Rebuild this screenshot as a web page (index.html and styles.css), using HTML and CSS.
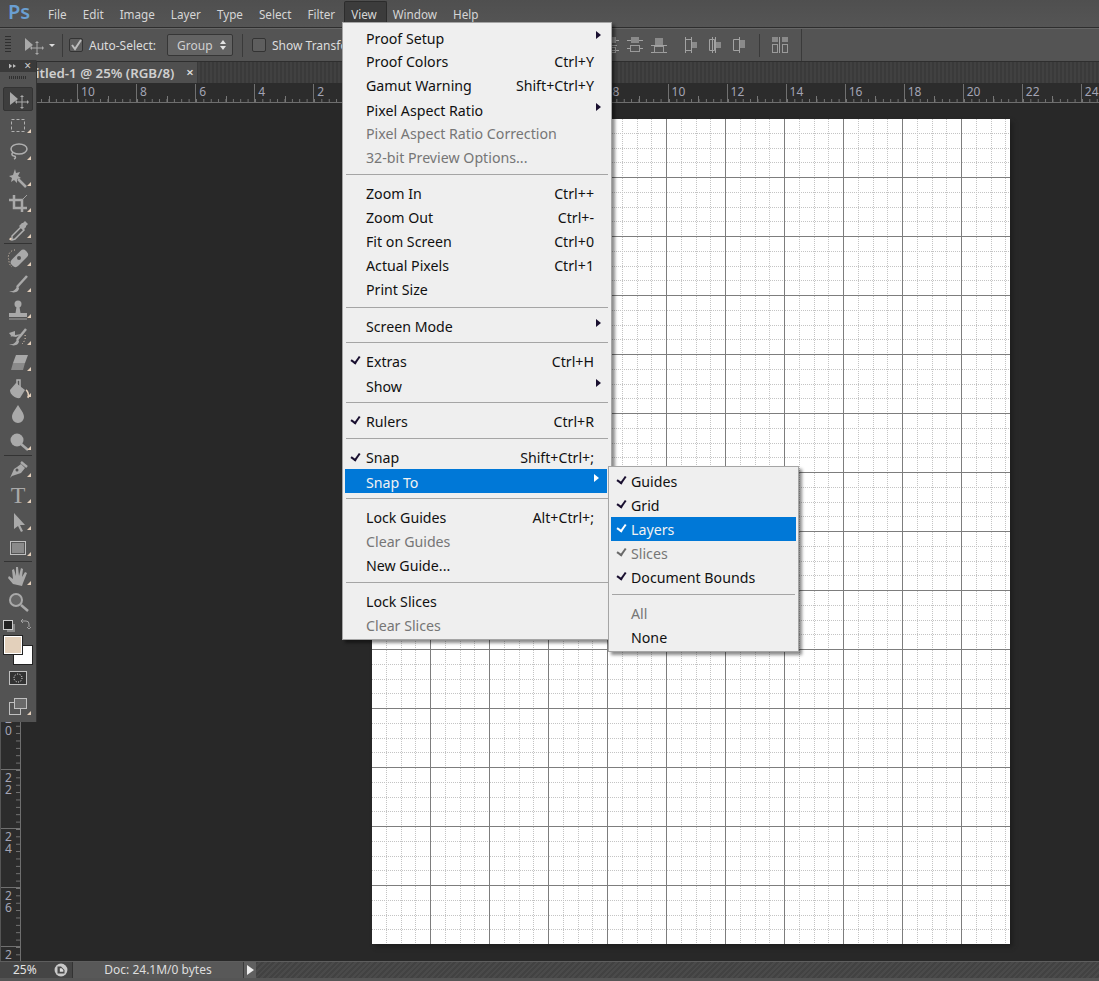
FILE: index.html
```html
<!DOCTYPE html>
<html lang="en">
<head>
<meta charset="utf-8">
<title>Photoshop</title>
<link rel="stylesheet" href="styles.css">
</head>
<body>
<div class="app">
  <header class="menubar">
    <span class="logo">Ps</span>
    <nav class="menus">
      <span>File</span><span>Edit</span><span>Image</span><span>Layer</span><span>Type</span><span>Select</span><span>Filter</span><span class="menu-open">View</span><span>Window</span><span>Help</span>
    </nav>
  </header>

  <section class="options">
    <span class="grip"></span>
    <svg class="opt-move" width="20" height="24" viewBox="0 0 20 24"><path class="f1" d="M1 5 9 12 1 18Z"/><path class="s2" d="M13 10v10M8 15h10"/><path class="f2" d="M13 8l2 2h-4zM13 22l2-2h-4zM6 15l2 2v-4zM20 15l-2 2v-4z"/></svg>
    <span class="caret"></span>
    <span class="vsep vsep-a"></span>
    <span class="check on"><svg width="14" height="14" viewBox="0 0 14 14"><path class="chk" d="M3 7l3 4 6-9"/></svg></span>
    <span class="opt-label">Auto-Select:</span>
    <span class="select">Group<svg width="8" height="12" viewBox="0 0 8 12"><path class="fw" d="M4 1 7 5H1zM4 11 1 7h6z"/></svg></span>
    <span class="vsep vsep-b"></span>
    <span class="check"></span>
    <span class="opt-label">Show Transform Controls</span>
    <div class="align">
      <svg width="16" height="16" viewBox="0 0 16 16"><path class="s1" d="M0 3.500h16M2 8.500h12M0 13.500h16"/><rect class="f3" x="3" y="0" width="10" height="6"/><rect class="o1" x="3.500" y="10.500" width="9" height="5"/></svg>
      <svg class="al-m" width="16" height="16" viewBox="0 0 16 16"><path class="s1" d="M0 3.500h4M12 3.500h4M0 11.500h4M12 11.500h4"/><rect class="f3" x="4" y="0" width="8" height="6"/><rect class="o1" x="3.500" y="8.500" width="9" height="6"/></svg>
      <svg class="al-m" width="16" height="16" viewBox="0 0 16 16"><path class="s1" d="M0 8.500h16M0 15.500h16"/><rect class="f3" x="4" y="1" width="8" height="7"/><rect class="o1" x="3.500" y="9.500" width="9" height="6"/></svg>
      <svg class="al-l" width="12" height="16" viewBox="0 0 12 16"><path class="s1" d="M.5 0v16M6.500 0v16M.5 2.500h6M.5 13.500h6"/><rect class="f3" x="7" y="5" width="5" height="6"/></svg>
      <svg class="al-n" width="12" height="16" viewBox="0 0 12 16"><path class="s1" d="M3.500 0v16M.5 2.500h5v11h-5zM6.500 0v16"/><rect class="f3" x="7" y="5" width="5" height="6"/></svg>
      <svg class="al-n" width="12" height="16" viewBox="0 0 12 16"><path class="s1" d="M6.500 0v16M.5 2.500h6M.5 13.500h6M.5 2.500v11"/><rect class="f3" x="7" y="3" width="5" height="8"/></svg>
      <span class="vsep vsep-c"></span>
      <svg class="al-d" width="16" height="16" viewBox="0 0 16 16"><rect class="f3" x="0" y="0" width="6" height="5"/><rect class="f3" x="10" y="0" width="6" height="5"/><rect class="o1" x=".5" y="7.500" width="5" height="8"/><rect class="o1" x="10.500" y="7.500" width="5" height="8"/><path class="s1" d="M7.500 0v16"/></svg>
      <span class="vsep vsep-d"></span>
    </div>
  </section>

  <section class="tabbar">
    <div class="tab"><span class="tab-title">Untitled-1 @ 25% (RGB/8)</span><span class="tab-x">×</span></div>
  </section>

  <div class="ruler-top">
    <span>12</span><span>10</span><span>8</span><span>6</span><span>4</span><span>2</span><span>0</span><span>2</span><span>4</span><span>6</span><span>8</span><span>10</span><span>12</span><span>14</span><span>16</span><span>18</span><span>20</span><span>22</span><span>24</span>
  </div>

  <main class="workspace">
    <div class="ruler-left">
      <div class="v-cell"><span>2</span><span>0</span></div>
      <div class="v-cell"><span>2</span><span>2</span></div>
      <div class="v-cell"><span>2</span><span>4</span></div>
      <div class="v-cell"><span>2</span><span>6</span></div>
      <div class="v-cell"><span>2</span></div>
    </div>
    <div class="pasteboard">
      <svg class="doc" width="638" height="825" viewBox="0 0 638 825">
        <defs>
          <pattern id="cell" width="59" height="59" patternUnits="userSpaceOnUse">
            <rect width="59" height="59" fill="#fff"/>
            <path class="minor" d="M14.500 0v59M29.500 0v59M43.500 0v59M0 14.500h59M0 29.500h59M0 43.500h59"/>
            <path class="major" d="M58.500 0v59M0 58.500h59"/>
          </pattern>
        </defs>
        <rect width="638" height="825" fill="url(#cell)"/>
      </svg>
    </div>
  </main>

  <footer class="statusbar">
    <span class="zoomval">25%</span>
    <span class="st-icon"><svg width="14" height="14" viewBox="0 0 12 12"><circle cx="6" cy="6" r="5.500" fill="#c9c9c9"/><path d="M3 3h3l3 3v3H3z" fill="#4a4a4a"/><path d="M5 4.500h1.500l1.500 1.500v1.500H5z" fill="#ddd"/></svg></span>
    <span class="st-doc">Doc: 24.1M/0 bytes</span>
    <span class="st-arrow"></span>
    <span class="st-rest"></span>
  </footer>

  <aside class="toolbar">
    <div class="tb-head"><span class="tb-ff"></span><span class="tb-x">×</span></div>
    <div class="tb-grip"></div>
    <div class="tool active"><svg width="24" height="24" viewBox="0 0 24 24"><path class="f1" d="M4 5 12 12 4 18Z"/><path class="s2" d="M16 10v10M11 15h10"/><path class="f2" d="M16 8l2 2h-4zM16 22l2-2h-4zM9 15l2 2v-4zM23 15l-2 2v-4z"/></svg></div>
    <div class="tool more"><svg width="24" height="24" viewBox="0 0 24 24"><rect class="dash" x="5.500" y="6.500" width="13" height="12"/></svg></div>
    <div class="tool more"><svg width="24" height="24" viewBox="0 0 24 24"><ellipse class="o2" cx="13" cy="10" rx="8" ry="5"/><path class="o2" d="M7 13c-2 2-1 4 1 4s2 2 0 3"/></svg></div>
    <div class="tool more"><svg width="24" height="24" viewBox="0 0 24 24"><path class="f1" d="M9 3l1 4 4-1-2 4 3 2-4 1 0 4-3-3-3 2 1-4-3-2 4-1z"/><path class="s5" d="M12 13l8 8"/></svg></div>
    <div class="tool more"><svg width="24" height="24" viewBox="0 0 24 24"><path class="s5" d="M3 8h13v12M8 3v13h13"/><path class="s1" d="M16 8l5-5"/></svg></div>
    <div class="tool more"><svg width="24" height="24" viewBox="0 0 24 24"><path class="o2" d="M6 18l9-9 3 3-9 9-3 1z"/><path class="f1" d="M13 8l3-3 1 0 2-2 3 3-2 2 0 1-3 3z"/><path class="s4" d="M5 20l-1 2"/></svg></div>
    <div class="tb-sep"></div>
    <div class="tool more"><svg width="24" height="24" viewBox="0 0 24 24"><rect class="f1" x="3" y="8" width="20" height="9" rx="4" transform="rotate(-45 13 12)"/><circle class="dots-dark" cx="13" cy="12" r="2"/><path class="dot-tan" d="M9 4a7 7 0 0 0-6 10 8 8 0 0 0 3 7"/></svg></div>
    <div class="tool more"><svg width="24" height="24" viewBox="0 0 24 24"><path class="s5" d="M11 15l10-11"/><path class="f1" d="M3 19c4 1 7-1 8-5l2 2c0 4-5 6-10 3z"/></svg></div>
    <div class="tool more"><svg width="24" height="24" viewBox="0 0 24 24"><circle class="f1" cx="12" cy="6" r="3.500"/><path class="f1" d="M10.500 9h3l1 6h-5zM3 15h18v4H3z"/><path class="s1" d="M3 21h18"/></svg></div>
    <div class="tool more"><svg width="24" height="24" viewBox="0 0 24 24"><path class="s5" d="M11 15l9-11"/><path class="f1" d="M3 19c4 1 7-1 8-5l2 2c0 4-5 6-10 3zM3 8l6-2v4l7-1-6 3-6-1 2 1z"/><path class="dot-tan" d="M19 10c1 4-1 7-3 9"/></svg></div>
    <div class="tool more"><svg width="24" height="24" viewBox="0 0 24 24"><path class="f1" d="M10 4h12l-3 8H7z"/><path class="f3" d="M7 12h12l-2 7H5z"/></svg></div>
    <div class="tool more"><svg width="24" height="24" viewBox="0 0 24 24"><path class="f1" d="M4 13l6-7 9 7-5 8c-4 1-10-3-10-8z"/><path class="o2" d="M11 8V3h3v7"/><path class="tan-line" d="M20 13c2 1 3 5 2 8"/></svg></div>
    <div class="tool"><svg width="24" height="24" viewBox="0 0 24 24"><path class="f1" d="M12 2c3 5 6 8 6 12a6 6 0 0 1-12 0c0-4 3-7 6-12z"/></svg></div>
    <div class="tool more"><svg width="24" height="24" viewBox="0 0 24 24"><circle class="f1" cx="11" cy="10" r="6.500"/><path class="s5" d="M15 14l7 6"/></svg></div>
    <div class="tb-sep"></div>
    <div class="tool more"><svg width="24" height="24" viewBox="0 0 24 24"><path class="f1" d="M15 7l4 4-4 5-9 3-2 2 4-9 3-2z"/><path class="s5" d="M15 5l6 5"/><circle cx="11" cy="13" r="1.500" fill="#535353"/></svg></div>
    <div class="tool more tool-t"><span>T</span></div>
    <div class="tool more"><svg width="24" height="24" viewBox="0 0 24 24"><path class="f1" d="M8 3l11 12h-5l3 6-2 1-3-6-4 3z"/></svg></div>
    <div class="tool more"><svg width="24" height="24" viewBox="0 0 24 24"><rect class="o3" x="4.500" y="5.500" width="15" height="13"/><rect class="f3" x="6" y="7" width="12" height="10"/></svg></div>
    <div class="tb-sep tb-sep-gap"></div>
    <div class="tool more"><svg width="24" height="24" viewBox="0 0 24 24"><path class="f1" d="M7 19l-5-6 1-2 4 3-1-9 2-1 2 7 0-9h2l1 9 2-8 2 1-1 8 3-5 2 1-4 10-1 3z"/></svg></div>
    <div class="tool"><svg width="24" height="24" viewBox="0 0 24 24"><circle class="o4" cx="10" cy="9" r="6"/><path class="s5" d="M15 14l7 6"/></svg></div>
    <div class="tb-colors">
      <span class="mini-def"></span>
      <svg width="11" height="12" viewBox="0 0 11 12"><path class="s1" d="M1 2h5a3 3 0 0 1 3 3v3M1 2l2-2M1 2l2 2M9 10l-2-2M9 10l2-2"/></svg>
    </div>
    <div class="swatches"><span class="sw-bg"></span><span class="sw-fg"></span></div>
    <div class="tb-mask"><svg width="18" height="16" viewBox="0 0 18 16"><rect class="o3 fill-k" x=".5" y=".5" width="17" height="13"/><circle class="dots-w" cx="9" cy="7" r="4"/></svg></div>
    <div class="tb-screen more"><svg width="18" height="17" viewBox="0 0 18 17"><rect class="o3" x=".5" y="4.500" width="11" height="12"/><rect class="o3 fill-d" x="5.500" y=".5" width="12" height="10"/></svg></div>
  </aside>

  <div class="menu view-menu">
    <div class="mi sub short low"><span>Proof Setup</span></div>
    <div class="mi"><span>Proof Colors</span><kbd>Ctrl+Y</kbd></div>
    <div class="mi"><span>Gamut Warning</span><kbd>Shift+Ctrl+Y</kbd></div>
    <div class="mi sub tall short low"><span>Pixel Aspect Ratio</span></div>
    <div class="mi off"><span>Pixel Aspect Ratio Correction</span></div>
    <div class="mi off"><span>32-bit Preview Options...</span></div>
    <hr>
    <div class="mi"><span>Zoom In</span><kbd>Ctrl++</kbd></div>
    <div class="mi"><span>Zoom Out</span><kbd>Ctrl+-</kbd></div>
    <div class="mi"><span>Fit on Screen</span><kbd>Ctrl+0</kbd></div>
    <div class="mi"><span>Actual Pixels</span><kbd>Ctrl+1</kbd></div>
    <div class="mi"><span>Print Size</span></div>
    <hr>
    <div class="mi sub"><span>Screen Mode</span></div>
    <hr class="thin">
    <div class="mi tick"><span>Extras</span><kbd>Ctrl+H</kbd></div>
    <div class="mi sub tall"><span>Show</span></div>
    <hr class="thin">
    <div class="mi tick"><span>Rulers</span><kbd>Ctrl+R</kbd></div>
    <hr>
    <div class="mi tick"><span>Snap</span><kbd>Shift+Ctrl+;</kbd></div>
    <div class="mi sub hot"><span>Snap To</span></div>
    <hr>
    <div class="mi"><span>Lock Guides</span><kbd>Alt+Ctrl+;</kbd></div>
    <div class="mi off"><span>Clear Guides</span></div>
    <div class="mi"><span>New Guide...</span></div>
    <hr>
    <div class="mi"><span>Lock Slices</span></div>
    <div class="mi off"><span>Clear Slices</span></div>
  </div>

  <div class="menu snap-menu">
    <div class="mi tick"><span>Guides</span></div>
    <div class="mi tick"><span>Grid</span></div>
    <div class="mi tick hot"><span>Layers</span></div>
    <div class="mi tick off"><span>Slices</span></div>
    <div class="mi tick"><span>Document Bounds</span></div>
    <hr>
    <div class="mi off"><span>All</span></div>
    <div class="mi"><span>None</span></div>
  </div>
</div>
</body>
</html>
```

FILE: styles.css
```css
* { box-sizing: border-box; }
html, body { margin: 0; height: 100%; overflow: hidden; background: #282828; }
.app {
  position: relative; width: 1099px; height: 981px; overflow: hidden;
  display: flex; flex-direction: column;
  font-family: "Noto Sans", "Open Sans", sans-serif; color: #d6d6d6;
}

/* menu bar */
.menubar {
  flex: 0 0 28px; display: flex; align-items: center;
  background: linear-gradient(#4f4f4f, #555); border-bottom: 1px solid #2e2e2e;
}
.logo {
  width: 48px; padding-left: 8px; font-size: 20px; line-height: 26px; font-weight: 600; color: #6a9fd2;
  margin-top: -3px;
}
.menus { position: relative; z-index: 0; display: flex; gap: 16px; font-size: 11.700px; }
.menu-open { position: relative; }
.menu-open::before {
  content: ""; position: absolute; left: -7px; right: -10px; top: -5px; height: 29px;
  background: #3c3c3c; border: 1px solid #2c2c2c; border-bottom: 0; border-radius: 2px 2px 0 0; z-index: -1;
}

/* options bar */
.options {
  flex: 0 0 34px; position: relative; display: flex; align-items: center;
  background: #545454; border-bottom: 1px solid #2e2e2e; font-size: 12px;
  border-top: 1px solid #666;
}
.grip {
  width: 6px; height: 18px; margin-left: 5px;
  background: repeating-linear-gradient(#2f2f2f 0 1px, transparent 1px 3px);
}
.opt-move { margin: 0 0 0 13px; }
.f1 { fill: #a9a9a9; }
.f2 { fill: #a9a9a9; }
.f3 { fill: #8a8a8a; }
.fw { fill: #e4e4e4; }
.s1 { fill: none; stroke: #a2a2a2; stroke-width: 1; }
.s2 { fill: none; stroke: #a9a9a9; stroke-width: 1; }
.s4 { fill: none; stroke: #e3cfbb; stroke-width: 2; }
.s5 { fill: none; stroke: #a9a9a9; stroke-width: 2.500; }
.o1 { fill: none; stroke: #9a9a9a; }
.o2 { fill: none; stroke: #b0b0b0; stroke-width: 1.500; }
.o3 { fill: #555; stroke: #c0c0c0; stroke-width: 1; }
.o4 { fill: #666; stroke: #a9a9a9; stroke-width: 2; }
.dash { fill: none; stroke: #b0b0b0; stroke-width: 1; stroke-dasharray: 3 2; }
.chk { fill: none; stroke: #bdbdbd; stroke-width: 2; }
.dots-dark { fill: #555; }
.dot-tan { fill: none; stroke: #e3cfbb; stroke-width: 1; stroke-dasharray: 1 2; }
.tan-line { fill: none; stroke: #e3cfbb; stroke-width: 1.500; }
.dots-w { fill: none; stroke: #fff; stroke-width: 1; stroke-dasharray: 1 1.500; }
.fill-d { fill: #6a6a6a; }
.fill-k { fill: #333; }
.caret {
  width: 0; height: 0; margin-left: 5px;
  border-left: 3px solid transparent; border-right: 3px solid transparent; border-top: 3px solid #ddd;
}
.vsep { width: 1px; height: 23px; background: #3a3a3a; flex: none; }
.vsep-a { margin: 0 6px 0 7px; }
.vsep-b { margin: 0 9px 0 9px; }
.vsep-c { margin-left: 14px; height: 23px; }
.vsep-d { margin-left: 13px; height: 32px; }
.check {
  width: 14px; height: 14px; flex: none; background: #5e5e5e; border: 1px solid #333; border-radius: 2px;
  display: flex;
}
.check svg { margin: -1px; }
.opt-label { margin-left: 6px; white-space: nowrap; color: #dcdcdc; }
.check.on + .opt-label { width: 72px; }
.select {
  margin-left: 6px; width: 66px; height: 22px; flex: none; display: flex; align-items: center;
  justify-content: space-between; padding: 0 5px 0 9px; color: #d0d0d0;
  background: #636363; border: 1px solid #363636; border-radius: 2px;
}
.align { position: absolute; left: 603px; top: 0; height: 32px; display: flex; align-items: center; }
.al-m { margin-left: 8px; }
.al-l { margin-left: 18px; }
.al-n { margin-left: 12px; }
.al-d { margin-left: 12px; }

/* tabs */
.tabbar {
  flex: 0 0 22px; display: flex;
  background: repeating-linear-gradient(90deg, #3a3a3a 0 2px, #414141 2px 4px);
  border-bottom: 1px solid #2c2c2c;
}
.tab {
  width: 197px; padding-left: 12px; display: flex; align-items: center; background: #4f4f4f;
  font-size: 13.300px; font-weight: 600; color: #cfcfcf; white-space: nowrap;
}
.tab-x { margin-left: 12px; font-size: 13px; line-height: 1; color: #e0e0e0; }

/* rulers */
.ruler-top {
  flex: 0 0 19px; display: flex; padding-left: 18px; overflow: hidden;
  background: #2c2c2c; border-bottom: 1px solid #6e6e6e;
}
.ruler-top span {
  flex: 0 0 59.050px; padding-left: 3px; font-size: 12px; line-height: 15px; color: #a3a4b4;
  border-left: 1px solid #707070;
  background-image:
    linear-gradient(90deg, #777 1px, transparent 1px),
    linear-gradient(90deg, #777 1px, transparent 1px);
  background-size: 7.380px 3px, 29.520px 6px;
  background-position: left bottom, 29.500px bottom;
  background-repeat: repeat-x, no-repeat;
}
.workspace { flex: 1; display: flex; min-height: 0; }
.ruler-left {
  flex: 0 0 21px; padding-top: 607px; overflow: hidden; background: #2c2c2c;
  border-right: 1px solid #6e6e6e; border-left: 1px solid #555;
}
.v-cell {
  height: 59.050px; display: flex; flex-direction: column; padding-top: 2px; padding-left: 4px;
  border-top: 1px solid #707070; font-size: 12px; line-height: 12px; color: #a3a4b4;
  background-image:
    linear-gradient(#777 1px, transparent 1px);
  background-size: 4px 7.380px;
  background-position: right top;
  background-repeat: repeat-y;
}
.pasteboard { flex: 1; padding: 16px 0 0 351px; background: #282828; }
.doc { display: block; box-shadow: 3px 3px 4px #1f1f1f; }
.minor { fill: none; stroke: #c4c4c4; stroke-width: 1; stroke-dasharray: 1 1; shape-rendering: crispEdges; }
.major { fill: none; stroke: #7d7d7d; stroke-width: 1; shape-rendering: crispEdges; }

/* status bar */
.statusbar {
  flex: 0 0 20px; display: flex; height: 20px; font-size: 12px; line-height: 16px;
  background: #535353; border-top: 1px solid #5e5e5e; border-bottom: 3px solid #555;
  box-shadow: inset 0 -1px #2e2e2e;
}
.zoomval { width: 50px; padding-left: 13px; background: #454545; color: #e2e2e2; }
.st-icon { width: 23px; display: flex; align-items: center; justify-content: center; background: #454545; border-right: 1px solid #333; }
.st-doc { width: 171px; text-align: center; background: #585858; color: #dedede; border-right: 1px solid #3a3a3a; }
.st-arrow { width: 12px; position: relative; background: #606060; }
.st-arrow::after {
  content: ""; position: absolute; left: 3px; top: 3px;
  border-left: 7px solid #eee; border-top: 5px solid transparent; border-bottom: 5px solid transparent;
}
.st-rest { flex: 1; background: repeating-linear-gradient(135deg, #424242 0 2px, #4a4a4a 2px 4px); }

/* toolbar */
.toolbar {
  position: absolute; left: 0; top: 60px; width: 37px; height: 662px; background: #535353;
  border-right: 1px solid #333; border-top-right-radius: 2px;
  display: flex; flex-direction: column; align-items: stretch;
}
.tb-head {
  height: 12px; flex: none; background: #3a3a3a; display: flex; align-items: center; justify-content: space-between;
  padding: 0 5px 0 9px;
}
.tb-ff { width: 7px; height: 5px; background: linear-gradient(90deg, #bbb 3px, transparent 3px 4px, #bbb 4px); clip-path: polygon(0 0, 45% 50%, 45% 0, 100% 50%, 45% 100%, 45% 50%, 0 100%); }
.tb-x { font-size: 12px; line-height: 10px; color: #ccc; }
.tb-grip {
  height: 3px; margin: 4px 9px 7px; flex: none;
  background: repeating-linear-gradient(90deg, #2f2f2f 0 1px, transparent 1px 2px);
}
.tool { height: 26.300px; flex: none; position: relative; display: flex; align-items: center; justify-content: center; }
.tool svg { flex: none; }
.tool.active { height: 24px; margin: 1px 3px; background: #3e3e3e; border: 1px solid #333; border-radius: 2px; }
.more::after {
  content: ""; position: absolute; right: 5px; bottom: 5px;
  border-left: 4px solid transparent; border-bottom: 4px solid #e3cfbb;
}
.tool-t span { font: 24px/24px "Liberation Serif", serif; color: #a9a9a9; }
.tb-sep { height: 1px; flex: none; margin: 0 4px; background: #333; }
.tb-sep-gap { margin-bottom: 2px; }
.tb-colors { flex: none; height: 14px; margin-top: 1px; padding: 0 5px 0 3px; display: flex; justify-content: space-between; align-items: center; }
.mini-def { width: 10px; height: 10px; background: #222; border: 1px solid #ccc; box-shadow: 3px 3px 0 -1px #888; }
.swatches { flex: none; position: relative; height: 30px; margin: 3px 0 0 3px; }
.sw-fg, .sw-bg { position: absolute; width: 20px; height: 20px; border: 1px solid #222; }
.sw-fg { left: 0; top: 0; background: #e3d0bb; outline: 1px solid #fff; outline-offset: -2px; }
.sw-bg { left: 10px; top: 10px; background: #fff; }
.tb-mask { flex: none; height: 16px; margin: 6px 0 0 9px; display: flex; }
.tb-screen { position: relative; flex: none; height: 17px; margin: 11px 0 0 9px; display: flex; }
.tb-screen::after { right: 5px; bottom: 0; }

/* menus */
.menu {
  position: absolute; background: #efefef; border: 1px solid #a5a5a5; color: #111;
  box-shadow: 3px 3px 3px rgba(0,0,0,.45); font-size: 14.200px; padding: 3px 2px 2px;
}
.menu hr { height: 1px; border: 0; background: #a5a5a5; margin: 5px 1px 6.500px; }
.menu hr.thin { margin: 3.500px 1px 6.500px; }
.view-menu { left: 342px; top: 22px; width: 270px; height: 618px; }
.snap-menu { left: 608px; top: 466px; width: 191px; height: 186px; padding: 2px 2px; }
.mi {
  position: relative; height: 24px; display: flex; align-items: center; justify-content: space-between;
  padding: 0 15px 0 21px; white-space: nowrap;
}
.mi.short { height: 23px; }
.mi.low { padding-top: 2px; }
.snap-menu .mi { padding-left: 20px; }
.mi kbd { font: inherit; }
.mi.off { color: #767676; }
.mi.hot { background: #0078d7; color: #f2f2f2; }
.mi.tall { margin-top: 1px; }
.view-menu .mi.hot { margin: -1px 2px 0 0; padding-top: 3px; }
.sub::after {
  content: ""; position: absolute; right: 8px; top: 5px;
  border-left: 5px solid #1a1030; border-top: 4.500px solid transparent; border-bottom: 4.500px solid transparent;
}
.hot.sub::after { border-left-color: #fff; }
.tick::before {
  content: ""; position: absolute; left: 6px; top: 7px; width: 7px; height: 4px;
  border-left: 2.500px solid #1a1030; border-bottom: 2.500px solid #1a1030; transform: rotate(-55deg);
}
.hot.tick::before { border-color: #fff; }
.off.tick::before { border-color: #6a6a6a; }
```
